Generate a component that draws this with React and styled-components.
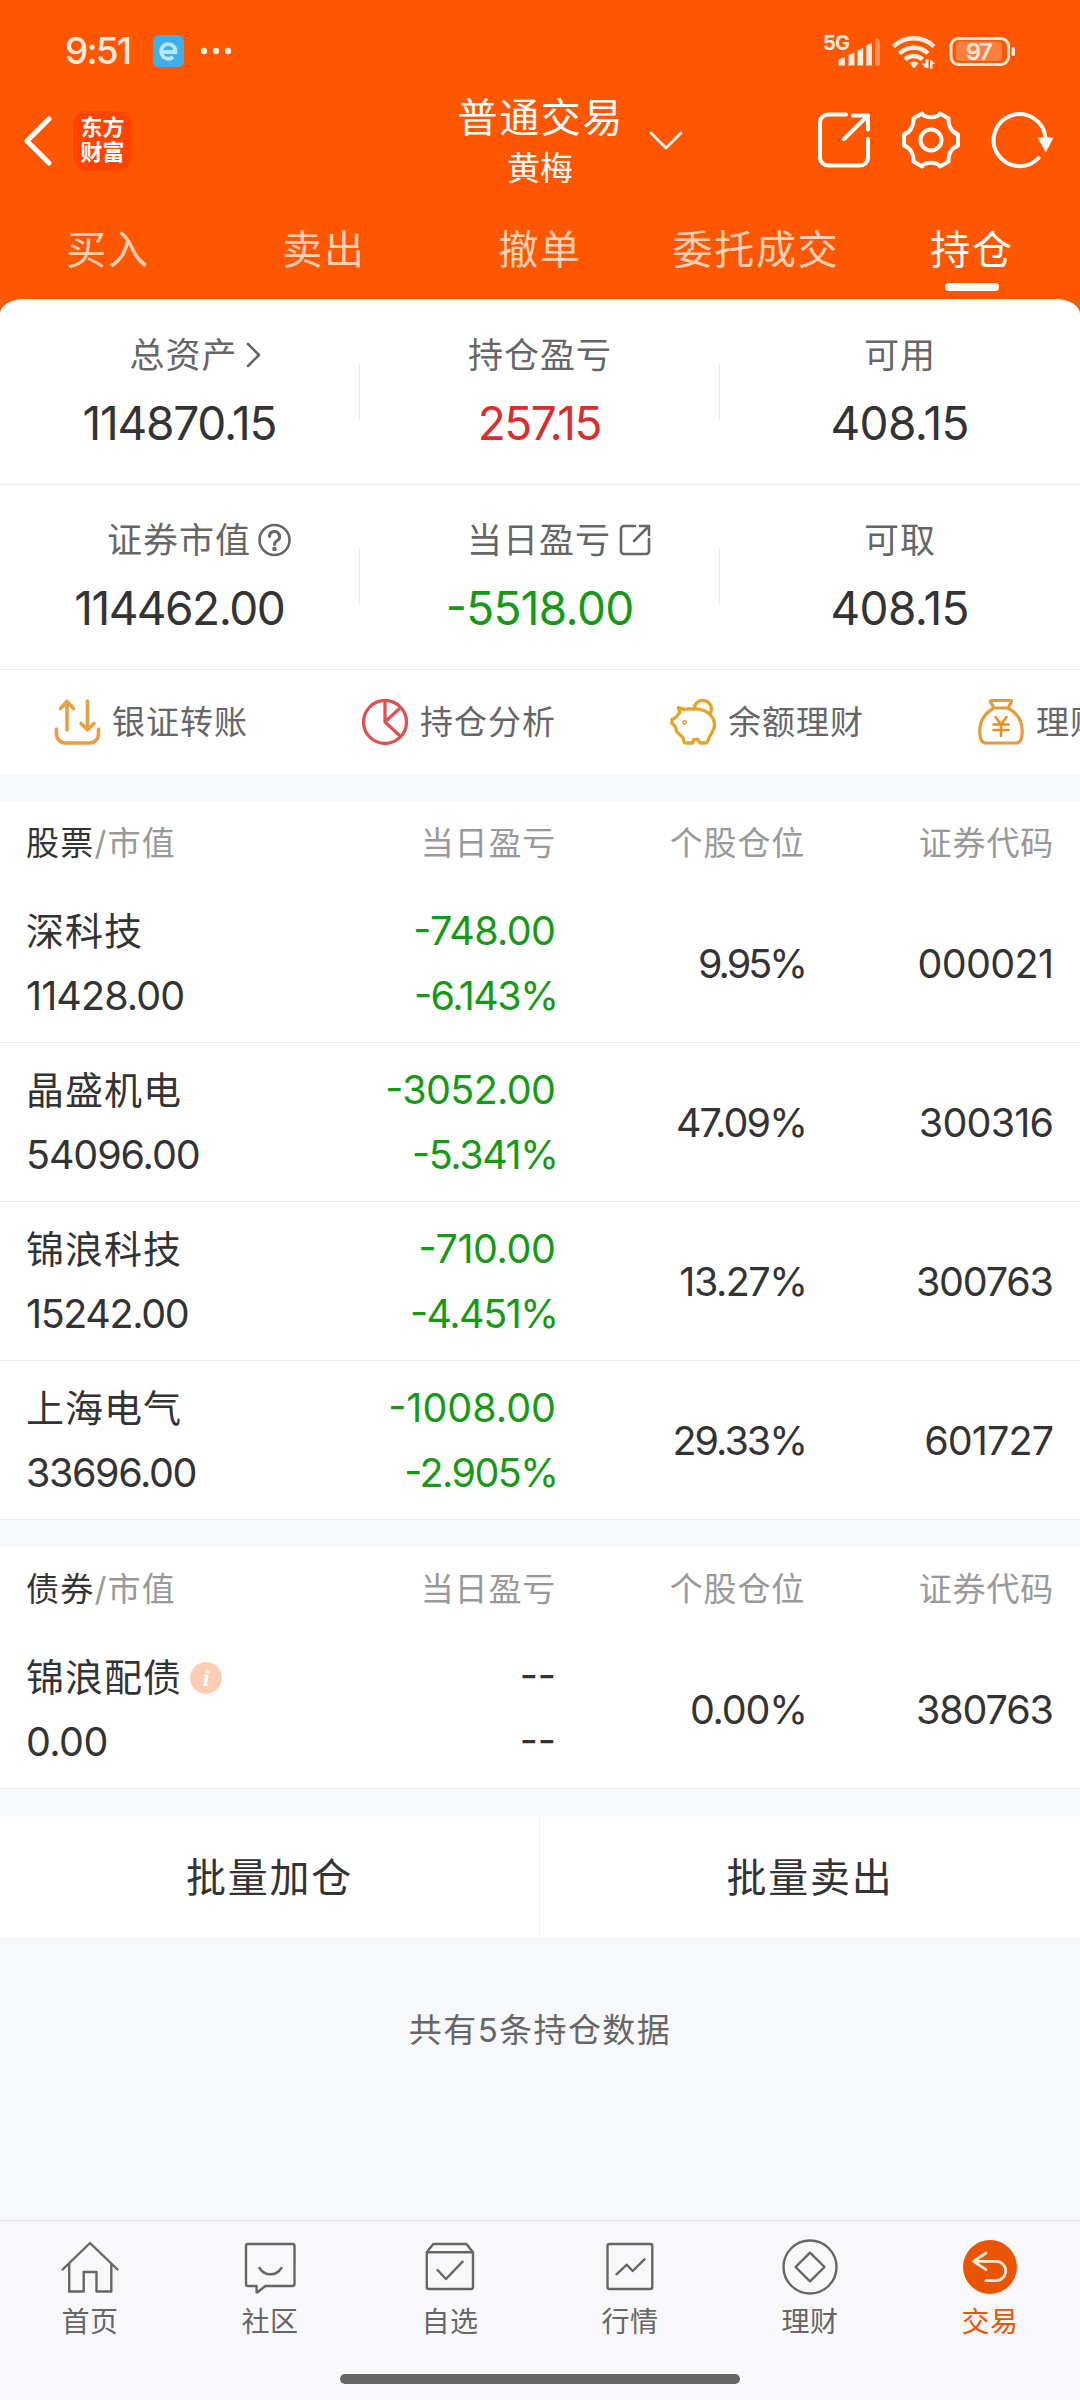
import React from "react";
import styled, { createGlobalStyle } from "styled-components";

const FONT = `Inter, "Noto Sans CJK SC", sans-serif`;

const Global = createGlobalStyle`
  * { box-sizing: border-box; }
  body { margin: 0; background: #f7f8fa; font-family: ${FONT}; color: #333; }
  svg { display: block; flex: none; }
`;

const Page = styled.div`
  width: 1080px;
  height: 2400px;
  display: flex;
  flex-direction: column;
  overflow: hidden;
  background: #f6f8fa;
`;

const Header = styled.header`
  height: 299px;
  background: #ff5600;
  color: #fff;
  display: flex;
  flex-direction: column;
`;

const StatusBar = styled.div`
  height: 89px;
  padding: 13px 64px 0 65px;
  display: flex;
  align-items: center;
  justify-content: space-between;
  color: #ffeade;
`;

const StatusSide = styled.div`
  display: flex;
  align-items: center;
`;

const Clock = styled.span`
  font-size: 37px;
  font-weight: 500;
  line-height: 40px;
  width: 88px;
  letter-spacing: -1.9px;
`;

const TitleBar = styled.div`
  height: 100px;
  display: grid;
  grid-template-columns: 360px 360px 360px;
`;

const TitleLeft = styled.div`
  display: flex;
  align-items: center;
  padding-left: 21px;
  gap: 20px;
`;

const BrandTile = styled.div`
  width: 59px;
  height: 60px;
  border-radius: 14px;
  background: #ff4400;
  display: flex;
  flex-direction: column;
  align-items: center;
  justify-content: center;
  font-size: 22px;
  font-weight: 700;
  line-height: 25px;
  padding-bottom: 1px;
`;

const TitleCenter = styled.div`
  display: grid;
  grid-template-columns: 60px 240px 60px;
  align-items: center;
`;

const TitleText = styled.div`
  display: flex;
  flex-direction: column;
  align-items: center;
  padding-top: 3px;
`;

const Title = styled.div`
  font-size: 40px;
  line-height: 52px;
  letter-spacing: 1.6px;
  margin-right: -1.6px;
`;

const Subtitle = styled.div`
  font-size: 33px;
  line-height: 48px;
`;

const TitleRight = styled.div`
  display: flex;
  align-items: center;
  justify-content: flex-end;
  gap: 30px;
  padding: 0 25px 1px 0;
`;

const Tabs = styled.nav`
  height: 110px;
  display: grid;
  grid-template-columns: repeat(5, 1fr);
`;

const Tab = styled.div`
  display: flex;
  flex-direction: column;
  align-items: center;
  padding-top: 35px;
  font-size: 40px;
  line-height: 52px;
  letter-spacing: 1.8px;
  color: ${(p) => (p.$active ? "#fff" : "#ffd2b8")};
  &::after {
    content: "";
    width: 54px;
    height: 8px;
    margin-top: 7px;
    border-radius: 4px;
    background: ${(p) => (p.$active ? "#fff" : "transparent")};
  }
`;

const Backdrop = styled.div`
  background: linear-gradient(#e9610f 0 14px, #fff 14px);
`;

const Summary = styled.section`
  background: #fff;
  border-radius: 24px 24px 0 0 / 15px 15px 0 0;
`;

const SummaryRow = styled.div`
  height: ${(p) => p.$height}px;
  display: grid;
  grid-template-columns: repeat(3, 1fr);
  align-items: start;
  border-bottom: 1px solid #ebebeb;
`;

const Stat = styled.div`
  height: 100%;
  display: flex;
  flex-direction: column;
  align-items: center;
  padding-top: ${(p) => p.$top}px;
  background: ${(p) =>
    p.$last
      ? "none"
      : `linear-gradient(#ebebeb, #ebebeb) no-repeat 359px ${p.$top + 33}px / 1px 58px`};
`;

const StatLabel = styled.div`
  height: 50px;
  display: flex;
  align-items: center;
  gap: ${(p) => p.$gap || 0}px;
  font-size: 35px;
  line-height: 50px;
  letter-spacing: 1px;
  color: #666;
  padding-left: ${(p) => p.$shift || 0}px;
`;

const StatValue = styled.div`
  margin-top: 15px;
  font-size: 46px;
  line-height: 56px;
  letter-spacing: ${(p) => p.$track}px;
  margin-right: ${(p) => -p.$track}px;
  font-feature-settings: "case";
  color: ${(p) => p.$color || "#333"};
`;

const Shortcuts = styled.div`
  height: 105px;
  padding: 0 0 2px 53px;
  display: flex;
  overflow: hidden;
`;

const Shortcut = styled.div`
  flex: 0 0 308px;
  display: flex;
  align-items: center;
  gap: 11px;
  font-size: 33px;
  line-height: 48px;
  letter-spacing: 1px;
  color: #666;
  white-space: nowrap;
`;

const Holdings = styled.section`
  margin-top: ${(p) => p.$gap}px;
  background: #fff;
`;

const columns = `
  display: grid;
  grid-template-columns: 300px 230px 249px 249px;
  padding-left: 26px;
`;

const HeadRow = styled.div`
  ${columns}
  height: 83px;
  align-items: center;
  font-size: 33px;
  line-height: 48px;
  letter-spacing: 0.8px;
  color: #999;
  text-align: right;
`;

const HeadName = styled.div`
  text-align: left;
  letter-spacing: 1.2px;
  b { font-weight: 400; color: #333; }
`;

const Row = styled.div`
  ${columns}
  height: 159px;
  padding-top: 2px;
  align-items: center;
  border-bottom: 1px solid #ebebeb;
`;

const Pair = styled.div`
  display: flex;
  flex-direction: column;
  align-items: ${(p) => (p.$end ? "flex-end" : "flex-start")};
  color: ${(p) => p.$color || "#333"};
`;

const Name = styled.div`
  height: 65px;
  display: flex;
  align-items: center;
  gap: 8px;
  font-size: 38px;
  line-height: 65px;
  letter-spacing: 1px;
`;

const NumText = styled.div`
  font-size: 39.5px;
  line-height: 65px;
  letter-spacing: ${(p) => p.$track}px;
  margin-right: ${(p) => -p.$track - (p.$percent ? 3 : 0)}px;
  font-feature-settings: "case";
  text-align: right;
`;

const InfoDot = styled.span`
  width: 32px;
  height: 32px;
  border-radius: 50%;
  background: #ffcdb4;
  color: #fff;
  display: flex;
  align-items: center;
  justify-content: center;
  font: italic 700 24px/32px "Liberation Serif", serif;
  letter-spacing: 0;
`;

const Actions = styled.div`
  margin-top: 27px;
  height: 121px;
  background: #fff;
  display: grid;
  grid-template-columns: 1fr 1fr;
`;

const Action = styled.div`
  display: flex;
  align-items: center;
  justify-content: center;
  font-size: 40px;
  letter-spacing: 1.8px;
  padding-bottom: 4px;
  &:first-child { border-right: 1px solid #f2f2f2; }
`;

const Footnote = styled.div`
  flex: 1;
  padding-top: 68px;
  text-align: center;
  font-size: 33px;
  line-height: 50px;
  letter-spacing: 1.4px;
  color: #666;
`;

const NavBar = styled.nav`
  height: 180px;
  border-top: 1px solid #e2e4e6;
  background: #f8f8fa;
  display: flex;
  flex-direction: column;
  align-items: center;
`;

const NavItems = styled.div`
  width: 100%;
  height: 153px;
  display: grid;
  grid-template-columns: repeat(6, 1fr);
`;

const NavItem = styled.div`
  display: flex;
  flex-direction: column;
  align-items: center;
  padding-top: 16px;
  font-size: 28px;
  line-height: 40px;
  letter-spacing: 0.6px;
  gap: 5px;
  color: ${(p) => (p.$active ? "#e95504" : "#666")};
`;

const HomeBar = styled.div`
  width: 400px;
  height: 10px;
  border-radius: 5px;
  background: #666;
`;

const Line = ({ w, h, sw = 2, children, ...rest }) => (
  <svg width={w} height={h} viewBox={`0 0 ${w} ${h}`} fill="none" stroke="currentColor"
    strokeWidth={sw} strokeLinecap="round" strokeLinejoin="round" {...rest}>
    {children}
  </svg>
);

const BadgeIcon = styled.svg`
  margin-right: 16px;
`;

const AppBadge = () => (
  <BadgeIcon width="31" height="32" viewBox="0 0 31 32">
    <rect width="31" height="32" rx="6" fill="#3faee9" />
    <path d="M8 17H22.500a7.200 7.400 0 1 0-2.400 5" fill="none" stroke="#b5e8fd" strokeWidth="3.800" />
  </BadgeIcon>
);

const Dots = () => (
  <svg width="32" height="8" viewBox="0 0 32 8" fill="currentColor">
    <circle cx="4" cy="4" r="3.200" /><circle cx="16" cy="4" r="3.200" /><circle cx="28" cy="4" r="3.200" />
  </svg>
);

const StatusIcons = () => (
  <svg width="194" height="40" viewBox="822 30 194 40" fill="currentColor">
    <text x="823" y="49" fontFamily="Inter" fontSize="20" fontWeight="700" letterSpacing="-0.800">5G</text>
    <path d="M838.500 60q0-2.500 6.500-3.500v8h-6.500zM848.500 54l6-2.500v13h-6zM857.500 49.500l5.700-2.500v17.500h-5.700zM866.300 44.500l5.700-2.500v22.500h-5.700z" />
    <rect x="875" y="38" width="5" height="26.500" rx="1.500" opacity=".4" />
    <g fill="none" stroke="currentColor" strokeWidth="4.400">
      <path d="M893.500 45.500a29 29 0 0 1 40.500 0" />
      <path d="M899.500 52.500a20.500 20.500 0 0 1 28.500 0" />
      <path d="M905 58.500a12.500 12.500 0 0 1 17.500 0" />
    </g>
    <path d="M909.500 62q4.500-3 9 0l-3.500 4.500q-1 .800-2 0z" />
    <path d="M928.500 58.500v8.500h-2.800l-4.200-4.500h4v-4zM930 67.500v-8.500h1.500l3.500 4h-2.500v4.500z" />
    <rect x="951" y="37.500" width="57.500" height="26" rx="7.500" fill="none" stroke="currentColor" strokeWidth="3" />
    <rect x="956" y="40.500" width="46" height="19.500" rx="3" opacity=".28" />
    <rect x="1011.500" y="46" width="3.500" height="9" rx="1.700" />
    <text x="978.500" y="59" textAnchor="middle" fontFamily="Inter" fontSize="23.500" fontWeight="600" letterSpacing="-1.500">97</text>
  </svg>
);

const ShareIcon = () => (
  <Line w={54} h={58} sw={4}>
    <path d="M29 3.500H11a8 8 0 0 0-8 8v35a8 8 0 0 0 8 8h32a8 8 0 0 0 8-8V28" />
    <path d="M36 4.500h15v14M51 4.500L27 28" />
  </Line>
);

const GearIcon = () => (
  <Line w={60} h={60} sw={4}>
    <circle cx="30" cy="30" r="10.500" />
    <path d="M21 3.500C24 8.500 36 8.500 39 3.500L47.500 8.500C47 15 50 22 57 24.500V35.500C50 38 47 45 47.500 51.500L39 56.500C36 51.500 24 51.500 21 56.500L12.500 51.500C13 45 10 38 3 35.500V24.500C10 22 13 15 12.500 8.500Z" />
  </Line>
);

const RefreshIcon = () => (
  <Line w={64} h={60} sw={4}>
    <path d="M54.500 28A26 26 0 1 0 47.500 48" />
    <path d="M46.500 27.500h16L54.800 42.500z" fill="currentColor" stroke="none" />
  </Line>
);

const HelpIcon = () => (
  <Line w={33} h={34} sw={2.600}>
    <circle cx="16.500" cy="17" r="15" />
    <path d="M11.500 13.500a5 5 0 1 1 7.500 4.300c-1.800 1-2.500 1.800-2.500 3.700" strokeWidth="3" />
    <circle cx="16.500" cy="26" r="1" />
  </Line>
);

const LinkIcon = () => (
  <Line w={32} h={32} sw={2.600}>
    <path d="M16 2H5a3 3 0 0 0-3 3v22a3 3 0 0 0 3 3h22a3 3 0 0 0 3-3V15" />
    <path d="M21 2h9v9M30 2L15 17" />
  </Line>
);

const TransferIcon = () => (
  <Line w={48} h={48} sw={3.600} color="#e8a045">
    <path d="M14 32V4M7.500 10.500L14 3.500l6.500 7M34.500 3v28M28 25.500l6.500 6.500 6.500-6.500" />
    <path d="M3.500 31v5a9 9 0 0 0 9 9h24a9 9 0 0 0 9-9v-5" />
  </Line>
);

const PieIcon = () => (
  <Line w={48} h={48} sw={3.300} color="#e05252">
    <circle cx="24" cy="24" r="21.500" />
    <path d="M24 3v21l15 14M24 24l14-13" />
  </Line>
);

const PigIcon = () => (
  <Line w={48} h={48} sw={3.300} color="#e5a427">
    <path d="M9.300 9.700L15 11.300Q19 10.500 24 11C36 10.500 45.500 17 45.500 27C45.500 31 43 35 41 38L38.500 43.500Q38 45 36.500 45H31L29 41.500H25L23.500 45H17Q15.500 45 15 43.500L13.700 39.300L8 34L6 28L3 25.500V21.500L6.700 19.500L11 14.300Z" />
    <path d="M25.300 10.500a8.500 8.500 0 1 1 16.200 4" />
    <circle cx="15.500" cy="24.500" r="0.800" />
  </Line>
);

const BagIcon = () => (
  <Line w={48} h={48} sw={3.200} color="#e59a3e">
    <path d="M14.500 2.500h19q1.500 0 1 1.500l-3.500 6H17l-3.500-6q-.500-1.500 1-1.500zM17 10C8 15 2.800 23 2.800 33c0 8 1.500 12 6 12h30.400c4.500 0 6-4 6-12C45.200 23 40 15 31 10" />
    <path d="M18.500 19l5.500 7.500 5.500-7.500M24 26.500v11.500M16.500 26.500h15M16.500 32h15" stroke="#ec8f22" strokeWidth="2.600" />
  </Line>
);

const navIcons = {
  home: <path d="M2.700 32.500L30 6l27.500 26.500M9.200 27v27.500h14.500V35h12.800v19.500h14.800V27" />,
  chat: <path d="M8 7h44.500a2 2 0 0 1 2 2v38a2 2 0 0 1-2 2H25.300l-7.700 6.300h-1V49H8a2 2 0 0 1-2-2V9a2 2 0 0 1 2-2zM19.400 31q4 6.300 11 6.300T41.400 31" />,
  pick: <path d="M6.800 15.300L13.300 7h33.100L53 15.300V50a2 2 0 0 1-2 2H8.800a2 2 0 0 1-2-2zH53M17.500 33l8.500 9 16.600-17.300" />,
  quote: <path d="M9.500 7h40.800a2 2 0 0 1 2 2v41a2 2 0 0 1-2 2H9.500a2 2 0 0 1-2-2V9a2 2 0 0 1 2-2zM16.500 37.300l10.300-9.600 5.900 6.300 11.700-11.700" />,
  wealth: <><circle cx="30" cy="30" r="26.500" /><path d="M30 15.700L44.500 30 30 44.300 15.600 30z" /></>,
  trade: <><circle cx="30" cy="30" r="27" fill="currentColor" stroke="none" /><path d="M26 16l-12.500 8.300L26 32.700M14 24.300h22a9.700 9.700 0 0 1 0 19.400H26" stroke="#ffeadb" strokeWidth="2.800" /></>,
};

const GREEN = "#169a16";

/* Each figure is [text, letter spacing in px]. */
const stocks = [
  { name: "深科技", value: ["11428.00", -0.9], profit: ["-748.00", -0.65], rate: ["-6.143%", -1.5], weight: ["9.95%", -3], code: ["000021", -0.65] },
  { name: "晶盛机电", value: ["54096.00", -1.1], profit: ["-3052.00", -0.65], rate: ["-5.341%", -1.4], weight: ["47.09%", -1.9], code: ["300316", -0.8] },
  { name: "锦浪科技", value: ["15242.00", -1.4], profit: ["-710.00", -0.4], rate: ["-4.451%", -1.5], weight: ["13.27%", -1.5], code: ["300763", -1.2] },
  { name: "上海电气", value: ["33696.00", -1.4], profit: ["-1008.00", 0], rate: ["-2.905%", -1.6], weight: ["29.33%", -2], code: ["601727", -0.9] },
];

const bonds = [
  { name: "锦浪配债", value: ["0.00", -0.6], profit: ["--", 0], rate: ["--", 0], weight: ["0.00%", -1.2], code: ["380763", -1.1], info: true },
];

const nav = [
  ["home", "首页"], ["chat", "社区"], ["pick", "自选"], ["quote", "行情"], ["wealth", "理财"], ["trade", "交易"],
];

const Num = ({ of: [text, track] }) => (
  <NumText $track={track} $percent={text.endsWith("%")}>{text}</NumText>
);

function HoldingTable({ kind, rows, color, gap }) {
  return (
    <Holdings $gap={gap}>
      <HeadRow>
        <HeadName><b>{kind}</b>/市值</HeadName>
        <div>当日盈亏</div>
        <div>个股仓位</div>
        <div>证券代码</div>
      </HeadRow>
      {rows.map((r) => (
        <Row key={r.name}>
          <Pair>
            <Name>{r.name}{r.info && <InfoDot>i</InfoDot>}</Name>
            <Num of={r.value} />
          </Pair>
          <Pair $end $color={color}>
            <Num of={r.profit} />
            <Num of={r.rate} />
          </Pair>
          <Num of={r.weight} />
          <Num of={r.code} />
        </Row>
      ))}
    </Holdings>
  );
}

const Chevron = styled.svg`
  margin-left: -11px;
`;

export default function App() {
  return (
    <Page>
      <Global />
      <Header>
        <StatusBar>
          <StatusSide>
            <Clock>9:51</Clock>
            <AppBadge />
            <Dots />
          </StatusSide>
          <StatusIcons />
        </StatusBar>
        <TitleBar>
          <TitleLeft>
            <Line w={32} h={50} sw={5}><path d="M28 3L6 25l22 22" /></Line>
            <BrandTile><span>东方</span><span>财富</span></BrandTile>
          </TitleLeft>
          <TitleCenter>
            <span />
            <TitleText>
              <Title>普通交易</Title>
              <Subtitle>黄梅</Subtitle>
            </TitleText>
            <Chevron width="34" height="20" viewBox="0 0 34 20" fill="none" stroke="currentColor"
              strokeWidth="2.600" strokeLinecap="round" strokeLinejoin="round">
              <path d="M2 2l15 15L32 2" />
            </Chevron>
          </TitleCenter>
          <TitleRight>
            <ShareIcon />
            <GearIcon />
            <RefreshIcon />
          </TitleRight>
        </TitleBar>
        <Tabs>
          {["买入", "卖出", "撤单", "委托成交", "持仓"].map((t) => (
            <Tab key={t} $active={t === "持仓"}>{t}</Tab>
          ))}
        </Tabs>
      </Header>

      <Backdrop>
        <Summary>
          <SummaryRow $height={186}>
            <Stat $top={31}>
              <StatLabel $gap={8} $shift={31}>总资产<Line w={16} h={26} sw={2.600}><path d="M2 2l11 11L2 24" /></Line></StatLabel>
              <StatValue $track={-1.2}>114870.15</StatValue>
            </Stat>
            <Stat $top={31}>
              <StatLabel>持仓盈亏</StatLabel>
              <StatValue $color="#d92e2e" $track={-1.5}>257.15</StatValue>
            </Stat>
            <Stat $top={31} $last>
              <StatLabel>可用</StatLabel>
              <StatValue $track={-0.6}>408.15</StatValue>
            </Stat>
          </SummaryRow>
          <SummaryRow $height={185}>
            <Stat $top={30}>
              <StatLabel $gap={7} $shift={38}>证券市值<HelpIcon /></StatLabel>
              <StatValue $track={-1.5}>114462.00</StatValue>
            </Stat>
            <Stat $top={30}>
              <StatLabel $gap={8} $shift={38}>当日盈亏<LinkIcon /></StatLabel>
              <StatValue $color={GREEN} $track={-0.7}>-5518.00</StatValue>
            </Stat>
            <Stat $top={30} $last>
              <StatLabel>可取</StatLabel>
              <StatValue $track={-0.6}>408.15</StatValue>
            </Stat>
          </SummaryRow>
          <Shortcuts>
            <Shortcut><TransferIcon />银证转账</Shortcut>
            <Shortcut><PieIcon />持仓分析</Shortcut>
            <Shortcut><PigIcon />余额理财</Shortcut>
            <Shortcut><BagIcon />理财</Shortcut>
          </Shortcuts>
        </Summary>
      </Backdrop>

      <HoldingTable kind="股票" rows={stocks} color={GREEN} gap={26} />
      <HoldingTable kind="债券" rows={bonds} gap={27} />

      <Actions>
        <Action>批量加仓</Action>
        <Action>批量卖出</Action>
      </Actions>

      <Footnote>共有5条持仓数据</Footnote>

      <NavBar>
        <NavItems>
          {nav.map(([id, label]) => (
            <NavItem key={id} $active={id === "trade"}>
              <Line w={60} h={60} sw={2.400}>{navIcons[id]}</Line>
              {label}
            </NavItem>
          ))}
        </NavItems>
        <HomeBar />
      </NavBar>
    </Page>
  );
}
